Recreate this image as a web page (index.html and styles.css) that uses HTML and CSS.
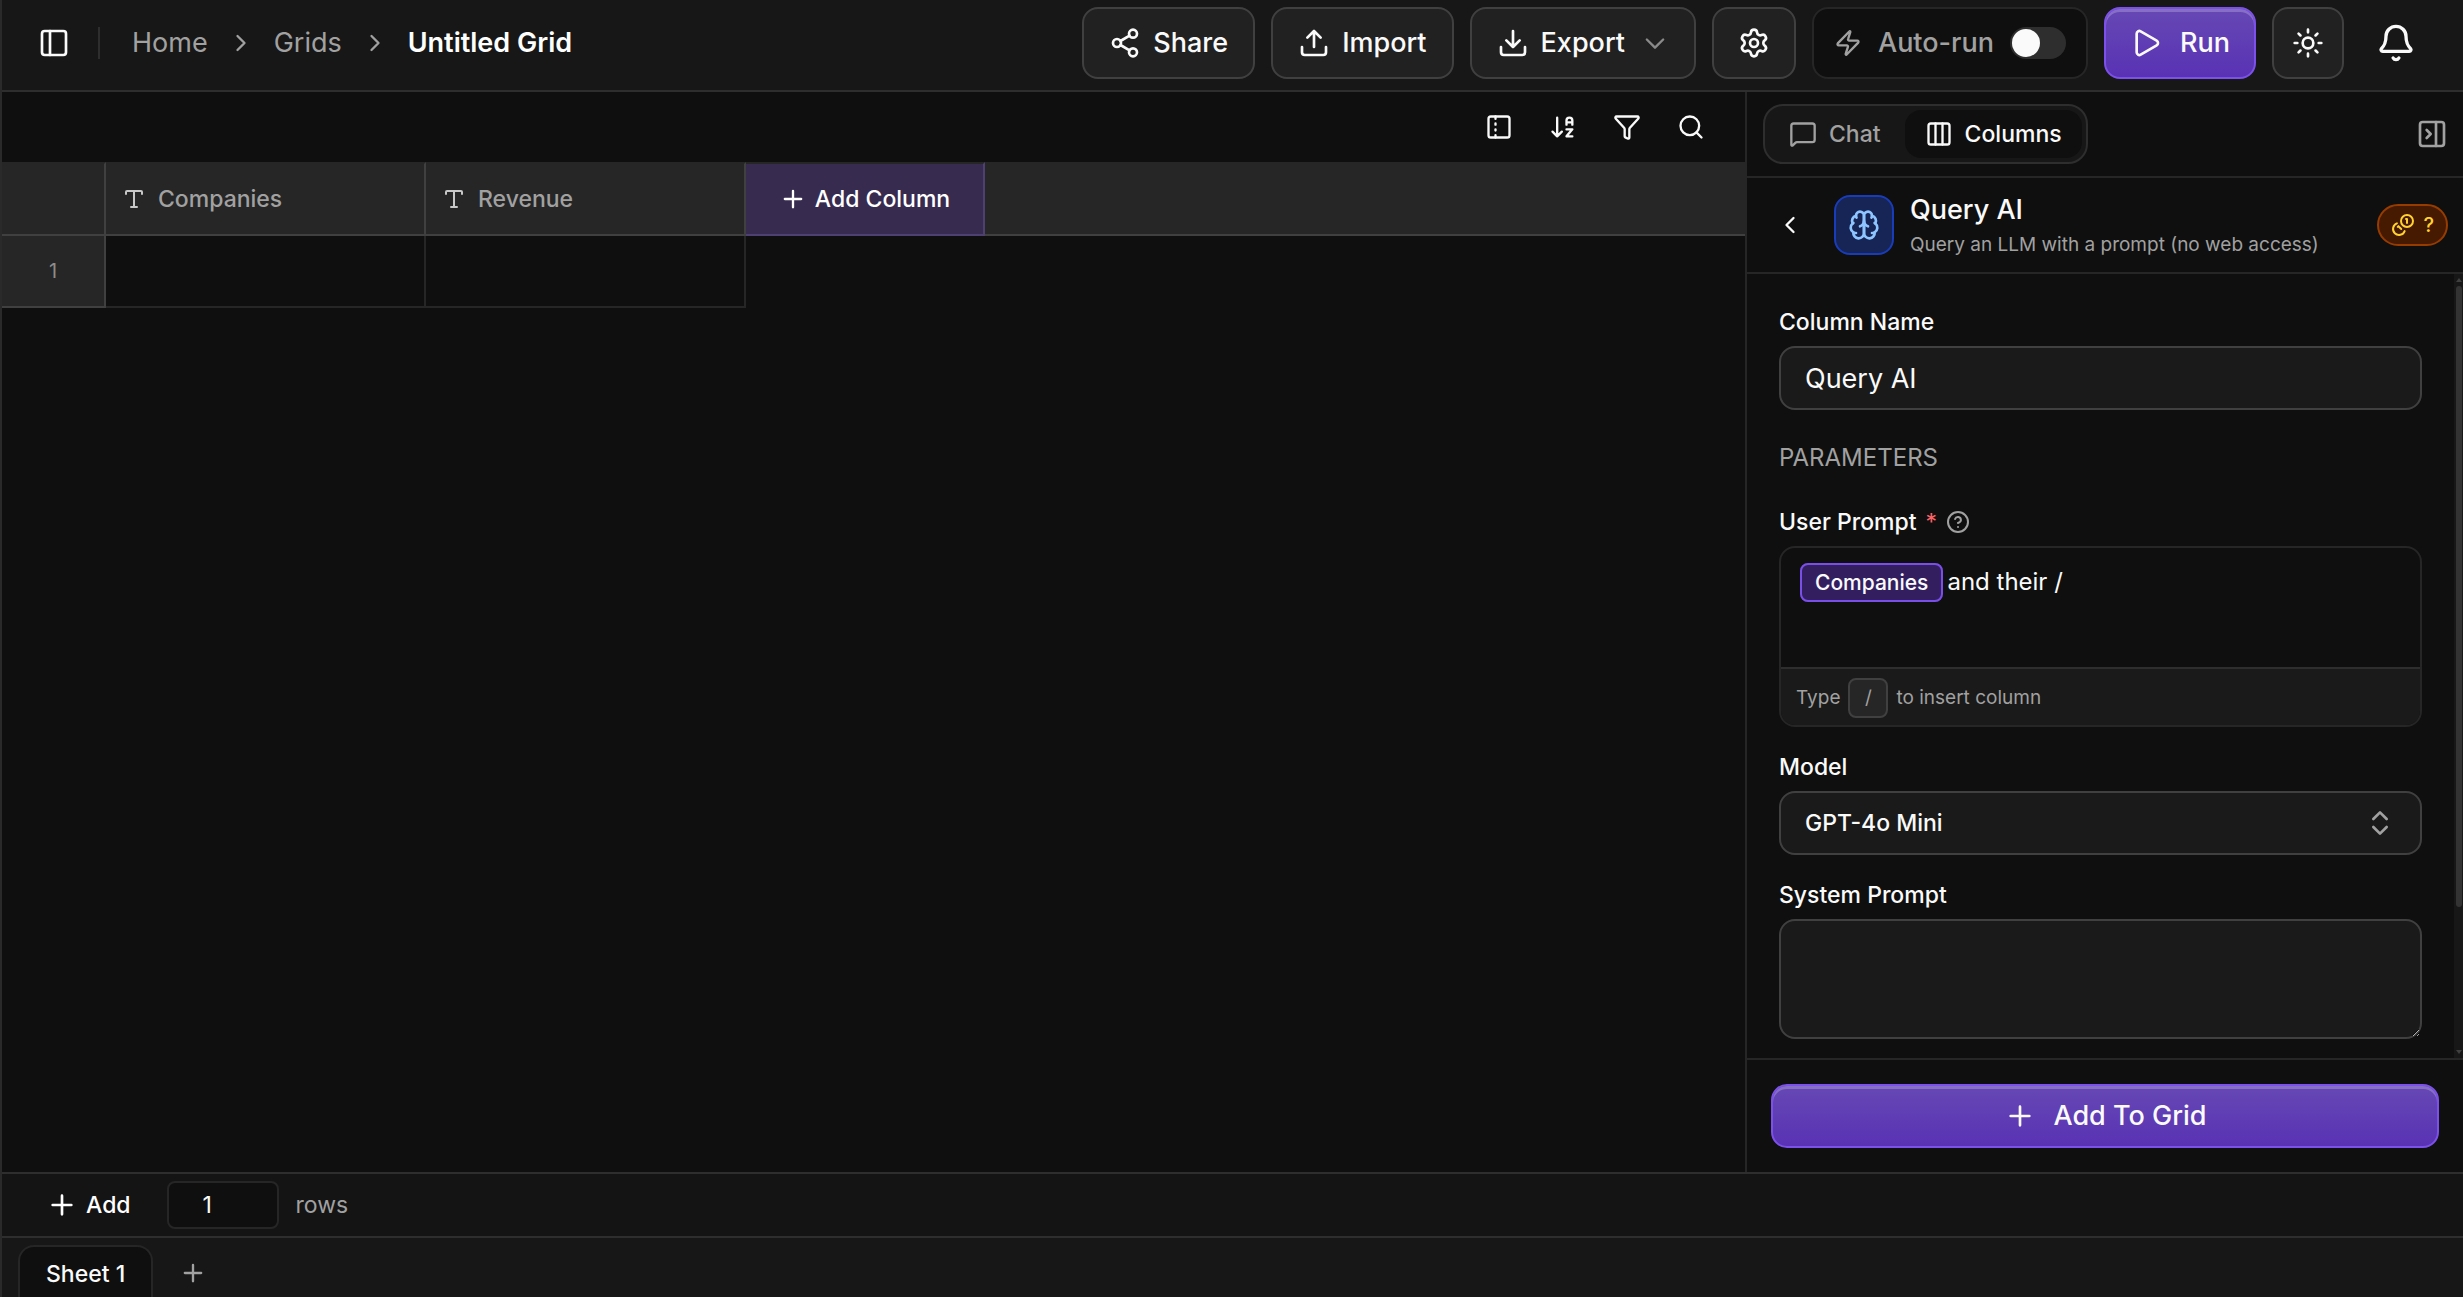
FILE: index.html
```html
<!DOCTYPE html>
<html lang="en">
<head>
    <meta charset="UTF-8">
    <meta name="viewport" content="width=device-width, initial-scale=1.0">
    <title>Untitled Grid</title>
    <link rel="stylesheet" href="styles.css">
</head>
<body>
    <div class="app">
        <header class="topbar">
            <button class="icon-button" aria-label="Toggle sidebar">
                <svg class="icon icon-lg" viewBox="0 0 24 24"><rect x="3" y="3" width="18" height="18" rx="2"/><path d="M9 3v18"/></svg>
            </button>
            <span class="divider"></span>
            <nav class="breadcrumb" aria-label="Breadcrumb">
                <a href="#">Home</a>
                <svg class="icon" viewBox="0 0 24 24"><path d="m9 18 6-6-6-6"/></svg>
                <a href="#">Grids</a>
                <svg class="icon" viewBox="0 0 24 24"><path d="m9 18 6-6-6-6"/></svg>
                <a href="#" class="current">Untitled Grid</a>
            </nav>
            <div class="actions">
                <button class="btn">
                    <svg class="icon icon-lg" viewBox="0 0 24 24"><circle cx="18" cy="5" r="3"/><circle cx="6" cy="12" r="3"/><circle cx="18" cy="19" r="3"/><path d="m8.59 13.51 6.83 3.98M15.41 6.51l-6.82 3.98"/></svg>
                    Share
                </button>
                <button class="btn">
                    <svg class="icon icon-lg" viewBox="0 0 24 24"><path d="M21 15v4a2 2 0 0 1-2 2H5a2 2 0 0 1-2-2v-4M17 8l-5-5-5 5M12 3v12"/></svg>
                    Import
                </button>
                <button class="btn">
                    <svg class="icon icon-lg" viewBox="0 0 24 24"><path d="M21 15v4a2 2 0 0 1-2 2H5a2 2 0 0 1-2-2v-4M7 10l5 5 5-5M12 15V3"/></svg>
                    Export
                    <svg class="icon caret" viewBox="0 0 24 24"><path d="m5 9 7 7 7-7"/></svg>
                </button>
                <button class="btn btn-gear" aria-label="Settings">
                    <svg class="icon icon-lg" viewBox="0 0 24 24"><path d="M9.671 4.136a2.34 2.34 0 0 1 4.659 0 2.34 2.34 0 0 0 3.319 1.915 2.34 2.34 0 0 1 2.33 4.033 2.34 2.34 0 0 0 0 3.831 2.34 2.34 0 0 1-2.33 4.033 2.34 2.34 0 0 0-3.319 1.915 2.34 2.34 0 0 1-4.659 0 2.34 2.34 0 0 0-3.32-1.915 2.34 2.34 0 0 1-2.33-4.033 2.34 2.34 0 0 0 0-3.831A2.34 2.34 0 0 1 6.35 6.051a2.34 2.34 0 0 0 3.319-1.915"/><circle cx="12" cy="12" r="3"/></svg>
                </button>
                <div class="auto-run">
                    <svg class="icon" viewBox="0 0 24 24"><path d="M4 14a1 1 0 0 1-.78-1.63l9.9-10.2a.5.5 0 0 1 .86.46l-1.92 6.02A1 1 0 0 0 13 10h7a1 1 0 0 1 .78 1.63l-9.9 10.2a.5.5 0 0 1-.86-.46l1.92-6.02A1 1 0 0 0 11 14z"/></svg>
                    <label for="auto-run">Auto-run</label>
                    <input type="checkbox" role="switch" id="auto-run" class="switch">
                </div>
                <button class="btn btn-primary">
                    <svg class="icon icon-lg" viewBox="0 0 24 24"><path d="M5 5a2 2 0 0 1 3.008-1.728l11.997 6.998a2 2 0 0 1 .003 3.458l-12 7A2 2 0 0 1 5 19z"/></svg>
                    Run
                </button>
                <button class="btn btn-square" aria-label="Toggle theme">
                    <svg class="icon icon-lg" viewBox="0 0 24 24"><circle cx="12" cy="12" r="4"/><path d="M12 2v2M12 20v2M4.93 4.93l1.41 1.41M17.66 17.66l1.41 1.41M2 12h2M20 12h2M6.34 17.66l-1.41 1.41M19.07 4.93l-1.41 1.41"/></svg>
                </button>
                <button class="icon-button bell" aria-label="Notifications">
                    <svg class="icon icon-xl" viewBox="0 0 24 24"><path d="M10.268 21a2 2 0 0 0 3.464 0M3.262 15.326A1 1 0 0 0 4 17h16a1 1 0 0 0 .74-1.673C19.41 13.956 18 12.499 18 8A6 6 0 0 0 6 8c0 4.499-1.411 5.956-2.738 7.326"/></svg>
                </button>
            </div>
        </header>

        <div class="workspace">
            <main class="grid-area">
                <div class="toolbar">
                    <button class="icon-button" aria-label="Freeze columns">
                        <svg class="icon" viewBox="0 0 24 24"><rect x="3" y="3" width="18" height="18" rx="2"/><path d="M9 3v2M9 9v1M9 14v1M9 19v2"/></svg>
                    </button>
                    <button class="icon-button" aria-label="Sort">
                        <svg class="icon" viewBox="0 0 24 24"><path d="m3 16 4 4 4-4M7 20V4M20 8h-5M15 10V6.5a2.5 2.5 0 0 1 5 0V10M15 14h5l-5 6h5"/></svg>
                    </button>
                    <button class="icon-button" aria-label="Filter">
                        <svg class="icon" viewBox="0 0 24 24"><path d="M10 20a1 1 0 0 0 .553.895l2 1A1 1 0 0 0 14 21v-7a2 2 0 0 1 .517-1.341L21.74 4.67A1 1 0 0 0 21 3H3a1 1 0 0 0-.742 1.67l7.225 7.989A2 2 0 0 1 10 14z"/></svg>
                    </button>
                    <button class="icon-button" aria-label="Search">
                        <svg class="icon" viewBox="0 0 24 24"><path d="m21 21-4.34-4.34"/><circle cx="11" cy="11" r="8"/></svg>
                    </button>
                </div>
                <table class="grid">
                    <thead>
                        <tr>
                            <th class="col-index"></th>
                            <th class="col-data">
                                <div class="cell-head">
                                    <svg class="icon icon-sm" viewBox="0 0 24 24"><path d="M12 4v16M4 7V5a1 1 0 0 1 1-1h14a1 1 0 0 1 1 1v2M9 20h6"/></svg>
                                    Companies
                                </div>
                            </th>
                            <th class="col-data">
                                <div class="cell-head">
                                    <svg class="icon icon-sm" viewBox="0 0 24 24"><path d="M12 4v16M4 7V5a1 1 0 0 1 1-1h14a1 1 0 0 1 1 1v2M9 20h6"/></svg>
                                    Revenue
                                </div>
                            </th>
                            <th class="col-add">
                                <button class="add-column">
                                    <svg class="icon" viewBox="0 0 24 24"><path d="M5 12h14M12 5v14"/></svg>
                                    Add Column
                                </button>
                            </th>
                            <th></th>
                        </tr>
                    </thead>
                    <tbody>
                        <tr>
                            <td class="row-index">1</td>
                            <td class="cell"></td>
                            <td class="cell"></td>
                        </tr>
                    </tbody>
                </table>
            </main>

            <aside class="panel">
                <div class="panel-top">
                    <div class="tabs" role="tablist">
                        <button class="tab" role="tab">
                            <svg class="icon" viewBox="0 0 24 24"><path d="M22 17a2 2 0 0 1-2 2H6.828a2 2 0 0 0-1.414.586l-2.202 2.202A.71.71 0 0 1 2 21.286V5a2 2 0 0 1 2-2h16a2 2 0 0 1 2 2z"/></svg>
                            Chat
                        </button>
                        <button class="tab active" role="tab" aria-selected="true">
                            <svg class="icon" viewBox="0 0 24 24"><rect x="3" y="3" width="18" height="18" rx="2"/><path d="M9 3v18M15 3v18"/></svg>
                            Columns
                        </button>
                    </div>
                    <button class="icon-button muted" aria-label="Close panel">
                        <svg class="icon icon-lg" viewBox="0 0 24 24"><rect x="3" y="3" width="18" height="18" rx="2"/><path d="M15 3v18M8 9l3 3-3 3"/></svg>
                    </button>
                </div>

                <div class="panel-head">
                    <button class="icon-button back" aria-label="Back">
                        <svg class="icon" viewBox="0 0 24 24"><path d="m15 18-6-6 6-6"/></svg>
                    </button>
                    <span class="tool-icon">
                        <svg class="icon icon-lg" viewBox="0 0 24 24"><path d="M12 5a3 3 0 1 0-5.997.125 4 4 0 0 0-2.526 5.77 4 4 0 0 0 .556 6.588A4 4 0 1 0 12 18Z"/><path d="M12 5a3 3 0 1 1 5.997.125 4 4 0 0 1 2.526 5.77 4 4 0 0 1-.556 6.588A4 4 0 1 1 12 18Z"/><path d="M15 13a4.5 4.5 0 0 1-3-4 4.5 4.5 0 0 1-3 4M17.599 6.5a3 3 0 0 0 .399-1.375M6.003 5.125A3 3 0 0 0 6.401 6.5M3.477 10.896a4 4 0 0 1 .585-.396M19.938 10.5a4 4 0 0 1 .585.396M6 18a4 4 0 0 1-1.967-.516M19.967 17.484A4 4 0 0 1 18 18"/></svg>
                    </span>
                    <div class="tool-text">
                        <h2>Query AI</h2>
                        <p>Query an LLM with a prompt (no web access)</p>
                    </div>
                    <span class="cost">
                        <svg class="icon icon-sm" viewBox="0 0 24 24"><circle cx="16" cy="8" r="6"/><path d="M5.91 10.37A6 6 0 1 0 13.66 18.09M15 6h1v4M6.71 13.88l.7-.71 2.82 2.82"/></svg>
                        ?
                    </span>
                </div>

                <div class="panel-scroll">
                    <form class="panel-body">
                        <div class="field">
                            <label for="column-name">Column Name</label>
                            <input type="text" id="column-name" class="input" value="Query AI">
                        </div>
                        <h3>PARAMETERS</h3>
                        <div class="field">
                            <div class="label-row">
                                <label id="prompt-label">User Prompt</label>
                                <span class="required">*</span>
                                <svg class="icon icon-sm muted" viewBox="0 0 24 24"><circle cx="12" cy="12" r="10"/><path d="M9.09 9a3 3 0 0 1 5.83 1c0 2-3 3-3 3M12 17h.01"/></svg>
                            </div>
                            <div class="editor">
                                <div class="editor-text" contenteditable="true" role="textbox" aria-multiline="true" aria-labelledby="prompt-label"><span class="chip" contenteditable="false">Companies</span>and their /</div>
                                <div class="editor-hint">Type <kbd>/</kbd> to insert column</div>
                            </div>
                        </div>
                        <div class="field">
                            <label for="model">Model</label>
                            <div class="select">
                                <select id="model" class="input">
                                    <option>GPT-4o Mini</option>
                                </select>
                                <svg class="icon icon-lg muted" viewBox="0 0 24 24"><path d="m7 15 5 5 5-5M7 9l5-5 5 5"/></svg>
                            </div>
                        </div>
                        <div class="field">
                            <label for="system-prompt">System Prompt</label>
                            <textarea id="system-prompt" class="input"></textarea>
                        </div>
                    </form>
                    <div class="scrollbar">
                        <span class="arrow-up"></span>
                        <span class="thumb"></span>
                        <span class="arrow-down"></span>
                    </div>
                </div>

                <div class="panel-footer">
                    <button class="btn btn-primary btn-block">
                        <svg class="icon icon-lg" viewBox="0 0 24 24"><path d="M5 12h14M12 5v14"/></svg>
                        Add To Grid
                    </button>
                </div>
            </aside>
        </div>

        <div class="rows-bar">
            <button class="add-rows">
                <svg class="icon icon-lg" viewBox="0 0 24 24"><path d="M5 12h14M12 5v14"/></svg>
                Add
            </button>
            <input type="text" inputmode="numeric" id="row-count" class="row-count" value="1">
            <label for="row-count">rows</label>
        </div>

        <footer class="sheets">
            <button class="sheet">Sheet 1</button>
            <button class="icon-button add-sheet" aria-label="Add sheet">
                <svg class="icon" viewBox="0 0 24 24"><path d="M5 12h14M12 5v14"/></svg>
            </button>
        </footer>
    </div>
</body>
</html>
```

FILE: styles.css
```css
* {
    box-sizing: border-box;
}
body {
    margin: 0;
    font-family: Inter, "Liberation Sans", sans-serif;
    font-size: 23px;
    line-height: 32px;
    background: #0f0f0f;
    color: #fafafa;
}
button, input, select, textarea {
    font: inherit;
    color: inherit;
}
button {
    display: flex;
    align-items: center;
    justify-content: center;
    padding: 0;
    border: none;
    background: none;
    font-weight: 500;
    cursor: pointer;
}
a {
    color: inherit;
    text-decoration: none;
}
.app {
    display: flex;
    flex-direction: column;
    height: 100vh;
    overflow: hidden;
    border-left: 2px solid #2a2a2a;
}

/* icons */
.icon {
    width: 28px;
    height: 28px;
    flex: none;
    fill: none;
    stroke: currentColor;
    stroke-width: 2;
    stroke-linecap: round;
    stroke-linejoin: round;
}
.icon-sm {
    width: 24px;
    height: 24px;
}
.icon-lg {
    width: 32px;
    height: 32px;
}
.icon-xl {
    width: 40px;
    height: 40px;
}
.muted {
    color: #a1a1a1;
}

/* top bar */
.topbar {
    display: flex;
    align-items: center;
    padding: 7px 31px 11px 36px;
    background: #171717;
    border-bottom: 2px solid #2e2e2e;
    font-size: 27px;
}
.divider {
    width: 2px;
    height: 32px;
    margin: 0 32px 0 28px;
    background: #2e2e2e;
}
.breadcrumb {
    display: flex;
    align-items: center;
    gap: 19px;
    color: #a1a1a1;
}
.breadcrumb .current {
    color: #fff;
    font-weight: 600;
}
.actions {
    display: flex;
    gap: 16px;
    margin-left: auto;
}
.btn {
    gap: 12px;
    height: 72px;
    padding: 0 25px;
    border: 2px solid #404040;
    border-radius: 16px;
    background: #212121;
    font-size: 27px;
}
.caret {
    margin-left: 4px;
    color: #8a8a8a;
}
.btn-gear {
    width: 84px;
    padding: 0;
}
.btn-square {
    width: 72px;
    padding: 0;
}
.btn-primary {
    gap: 18px;
    padding: 0 24px;
    border-color: #7c50ea;
    background: linear-gradient(#6648b4, #5932b4);
    box-shadow: inset 0 3px 0 rgba(255, 255, 255, 0.22);
}
.auto-run {
    display: flex;
    align-items: center;
    gap: 16px;
    padding: 0 20px;
    border: 2px solid #262626;
    border-radius: 16px;
    background: #0f0f0f;
    color: #a1a1a1;
    font-weight: 500;
}
.switch {
    appearance: none;
    display: flex;
    align-items: center;
    width: 56px;
    height: 32px;
    margin: 0;
    padding: 2px;
    border-radius: 16px;
    background: #2e2e2e;
}
.switch::before {
    content: "";
    width: 28px;
    height: 28px;
    border-radius: 50%;
    background: #fafafa;
}
.bell {
    width: 72px;
}

/* grid */
.workspace {
    display: flex;
    flex: 1;
    min-height: 0;
}
.grid-area {
    flex: 1;
    min-width: 0;
}
.toolbar {
    display: flex;
    justify-content: flex-end;
    height: 70px;
    padding-right: 22px;
}
.toolbar .icon-button {
    width: 64px;
}
.grid {
    width: 100%;
    table-layout: fixed;
    border-spacing: 0;
}
.grid th {
    height: 74px;
    padding: 0;
    border-top: 2px solid #262626;
    border-bottom: 2px solid #404040;
    background: #262626;
    color: #a1a1a1;
    font-weight: 500;
}
.grid .col-index {
    width: 104px;
    border-right: 2px solid #404040;
}
.grid .col-data {
    width: 320px;
    border-right: 2px solid #404040;
}
.grid .col-add {
    width: 239px;
    border-right: 2px solid #4f4072;
    border-bottom-color: #4f4072;
    background: #382b50;
}
.cell-head {
    display: flex;
    align-items: center;
    gap: 12px;
    padding-left: 16px;
}
.cell-head .icon {
    stroke: #c8c8c8;
}
.add-column {
    width: 100%;
    gap: 8px;
    color: #fff;
}
.row-index {
    height: 72px;
    padding: 0;
    border-right: 2px solid #404040;
    border-bottom: 2px solid #404040;
    background: #262626;
    color: #8c8c8c;
    font-size: 20px;
    text-align: center;
}
.cell {
    border-right: 2px solid #262626;
    border-bottom: 2px solid #262626;
}

/* side panel */
.panel {
    display: flex;
    flex-direction: column;
    width: 718px;
    border-left: 2px solid #262626;
}
.panel-top {
    display: flex;
    justify-content: space-between;
    align-items: center;
    height: 86px;
    padding: 0 15px 0 16px;
    border-bottom: 2px solid #262626;
}
.tabs {
    display: flex;
    gap: 4px;
    padding: 4px;
    border: 2px solid #2e2e2e;
    border-radius: 20px;
    background: #171717;
}
.tab {
    gap: 12px;
    height: 48px;
    padding: 0 20px;
    border-radius: 16px;
    color: #a1a1a1;
}
.tab.active {
    background: #0f0f0f;
    color: #fafafa;
}
.panel-head {
    display: flex;
    align-items: center;
    gap: 16px;
    height: 96px;
    padding: 0 15px;
    border-bottom: 2px solid #262626;
}
.back {
    width: 56px;
    height: 56px;
}
.tool-icon {
    display: flex;
    align-items: center;
    justify-content: center;
    width: 60px;
    height: 60px;
    border: 2px solid #193cb8;
    border-radius: 16px;
    background: #162456;
    color: #8ec5ff;
}
.tool-text {
    flex: 1;
    padding-top: 2px;
}
.tool-text h2 {
    margin: 0;
    font-size: 27px;
    font-weight: 500;
    line-height: 38px;
}
.tool-text p {
    margin: 0;
    color: #a1a1a1;
    font-size: 19px;
}
.cost {
    display: flex;
    align-items: center;
    gap: 8px;
    height: 42px;
    padding: 0 12px;
    border: 2px solid #973c00;
    border-radius: 21px;
    background: #461901;
    color: #ffd230;
    font-size: 20px;
    font-weight: 500;
}
.panel-scroll {
    display: flex;
    flex: 1;
    min-height: 0;
}
.panel-body {
    display: flex;
    flex-direction: column;
    flex: 1;
    gap: 24px;
    padding: 32px;
    overflow: hidden;
}
.panel-body h3 {
    margin: 8px 0;
    color: #a1a1a1;
    font-size: 24px;
    font-weight: 400;
}
.field {
    display: flex;
    flex-direction: column;
    gap: 8px;
}
.field label {
    font-weight: 500;
}
.label-row {
    display: flex;
    align-items: center;
    gap: 9px;
}
.required {
    color: #ff6467;
}
.input {
    width: 100%;
    height: 64px;
    padding: 0 24px;
    border: 2px solid #404040;
    border-radius: 16px;
    background: #1a1a1a;
    font-size: 27px;
}
textarea.input {
    display: block;
    height: 120px;
    resize: vertical;
}
.select {
    position: relative;
}
.select select {
    display: block;
    appearance: none;
    font-size: 23px;
    font-weight: 500;
}
.select .icon {
    position: absolute;
    top: 16px;
    right: 26px;
    pointer-events: none;
}
.editor {
    border: 2px solid #262626;
    border-radius: 16px;
    overflow: hidden;
}
.editor-text {
    height: 119px;
    padding: 14px 19px;
    font-size: 24px;
    line-height: 40px;
    outline: none;
}
.chip {
    margin-right: 4px;
    padding: 5px 13px;
    border: 2px solid #7a4fe8;
    border-radius: 8px;
    background: #331f60;
    font-size: 21px;
    font-weight: 500;
}
.editor-hint {
    display: flex;
    align-items: center;
    gap: 8px;
    height: 58px;
    padding: 2px 15px 0;
    border-top: 2px solid #2e2e2e;
    background: #1a1a1a;
    color: #a1a1a1;
    font-size: 19px;
}
.editor-hint kbd {
    width: 40px;
    border: 2px solid #404040;
    border-radius: 8px;
    background: #262626;
    font: inherit;
    line-height: 36px;
    text-align: center;
}
.scrollbar {
    display: flex;
    flex-direction: column;
    align-items: center;
    width: 9px;
    padding: 4px 0;
    background: #171717;
}
.arrow-up {
    border: 3px solid transparent;
    border-top: none;
    border-bottom: 4px solid #404040;
}
.thumb {
    width: 6px;
    height: 80%;
    margin: 4px 0 auto;
    border-radius: 3px;
    background: #333;
}
.arrow-down {
    border: 3px solid transparent;
    border-bottom: none;
    border-top: 4px solid #404040;
}
.panel-footer {
    padding: 24px;
    border-top: 2px solid #262626;
}
.btn-block {
    width: 100%;
    height: 64px;
}

/* bottom bars */
.rows-bar {
    display: flex;
    align-items: center;
    height: 64px;
    padding-left: 44px;
    border-top: 2px solid #2e2e2e;
    background: #141414;
    color: #a1a1a1;
}
.add-rows {
    gap: 8px;
    color: #fff;
}
.row-count {
    width: 112px;
    height: 48px;
    margin: 0 17px 0 36px;
    padding: 0 34px;
    border: 2px solid #262626;
    border-radius: 8px;
    background: #0f0f0f;
    color: #fafafa;
}
.sheets {
    display: flex;
    gap: 26px;
    height: 61px;
    padding: 7px 16px 0;
    border-top: 2px solid #2e2e2e;
    background: #171717;
}
.sheet {
    padding: 4px 26px 0;
    border: 2px solid #262626;
    border-bottom: none;
    border-radius: 16px 16px 0 0;
    background: #0f0f0f;
}
.add-sheet {
    padding-top: 4px;
    color: #a1a1a1;
}
```
